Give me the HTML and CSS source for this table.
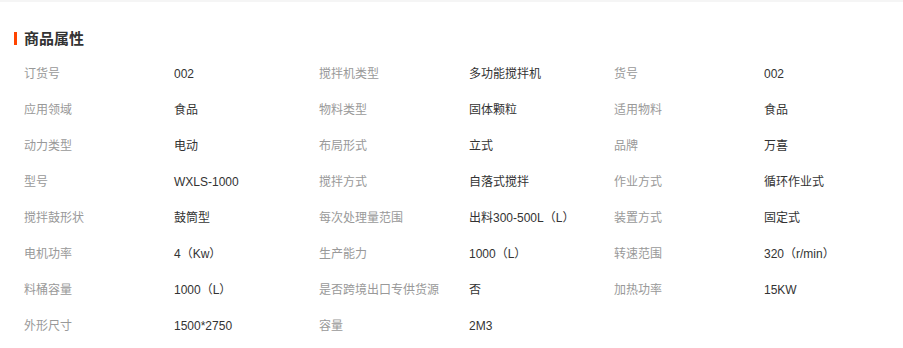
FILE: index.html
```html
<!DOCTYPE html>
<html lang="zh">
<head>
<meta charset="utf-8">
<link rel="stylesheet" href="styles.css">
</head>
<body>
<div class="strip"></div>
<section class="attrs">
  <h2 class="title">商品属性</h2>
  <div class="grid">
    <div class="k">订货号</div><div class="v">002</div>
    <div class="k">搅拌机类型</div><div class="v">多功能搅拌机</div>
    <div class="k">货号</div><div class="v">002</div>

    <div class="k">应用领域</div><div class="v">食品</div>
    <div class="k">物料类型</div><div class="v">固体颗粒</div>
    <div class="k">适用物料</div><div class="v">食品</div>

    <div class="k">动力类型</div><div class="v">电动</div>
    <div class="k">布局形式</div><div class="v">立式</div>
    <div class="k">品牌</div><div class="v">万喜</div>

    <div class="k">型号</div><div class="v">WXLS-1000</div>
    <div class="k">搅拌方式</div><div class="v">自落式搅拌</div>
    <div class="k">作业方式</div><div class="v">循环作业式</div>

    <div class="k">搅拌鼓形状</div><div class="v">鼓筒型</div>
    <div class="k">每次处理量范围</div><div class="v">出料300-500L（L）</div>
    <div class="k">装置方式</div><div class="v">固定式</div>

    <div class="k">电机功率</div><div class="v">4（Kw）</div>
    <div class="k">生产能力</div><div class="v">1000（L）</div>
    <div class="k">转速范围</div><div class="v">320（r/min）</div>

    <div class="k">料桶容量</div><div class="v">1000（L）</div>
    <div class="k">是否跨境出口专供货源</div><div class="v">否</div>
    <div class="k">加热功率</div><div class="v">15KW</div>

    <div class="k">外形尺寸</div><div class="v">1500*2750</div>
    <div class="k">容量</div><div class="v">2M3</div>
  </div>
</section>
</body>
</html>
```
FILE: styles.css
```css
html, body {
  margin: 0;
  padding: 0;
  background: #fff;
}
body {
  font-family: "Liberation Sans", "Noto Sans CJK SC", sans-serif;
  color: #333;
}
.strip {
  height: 2px;
  background: #f5f5f5;
}
.attrs {
  padding: 26px 0 0 0;
}
.title {
  margin: 0 0 0 14px;
  padding-left: 7px;
  border-left: 3px solid #ff4400;
  font-size: 15px;
  font-weight: bold;
  line-height: 13px;
  height: 13px;
  margin-top: 4px;
  color: #333;
}
.grid {
  display: grid;
  grid-template-columns: 150px 145px 150px 145px 150px 145px;
  grid-auto-rows: 36px;
  margin: 11px 0 0 24px;
  font-size: 12px;
  line-height: 36px;
}
.k {
  color: #999;
  white-space: nowrap;
}
.v {
  color: #333;
  white-space: nowrap;
}
```
